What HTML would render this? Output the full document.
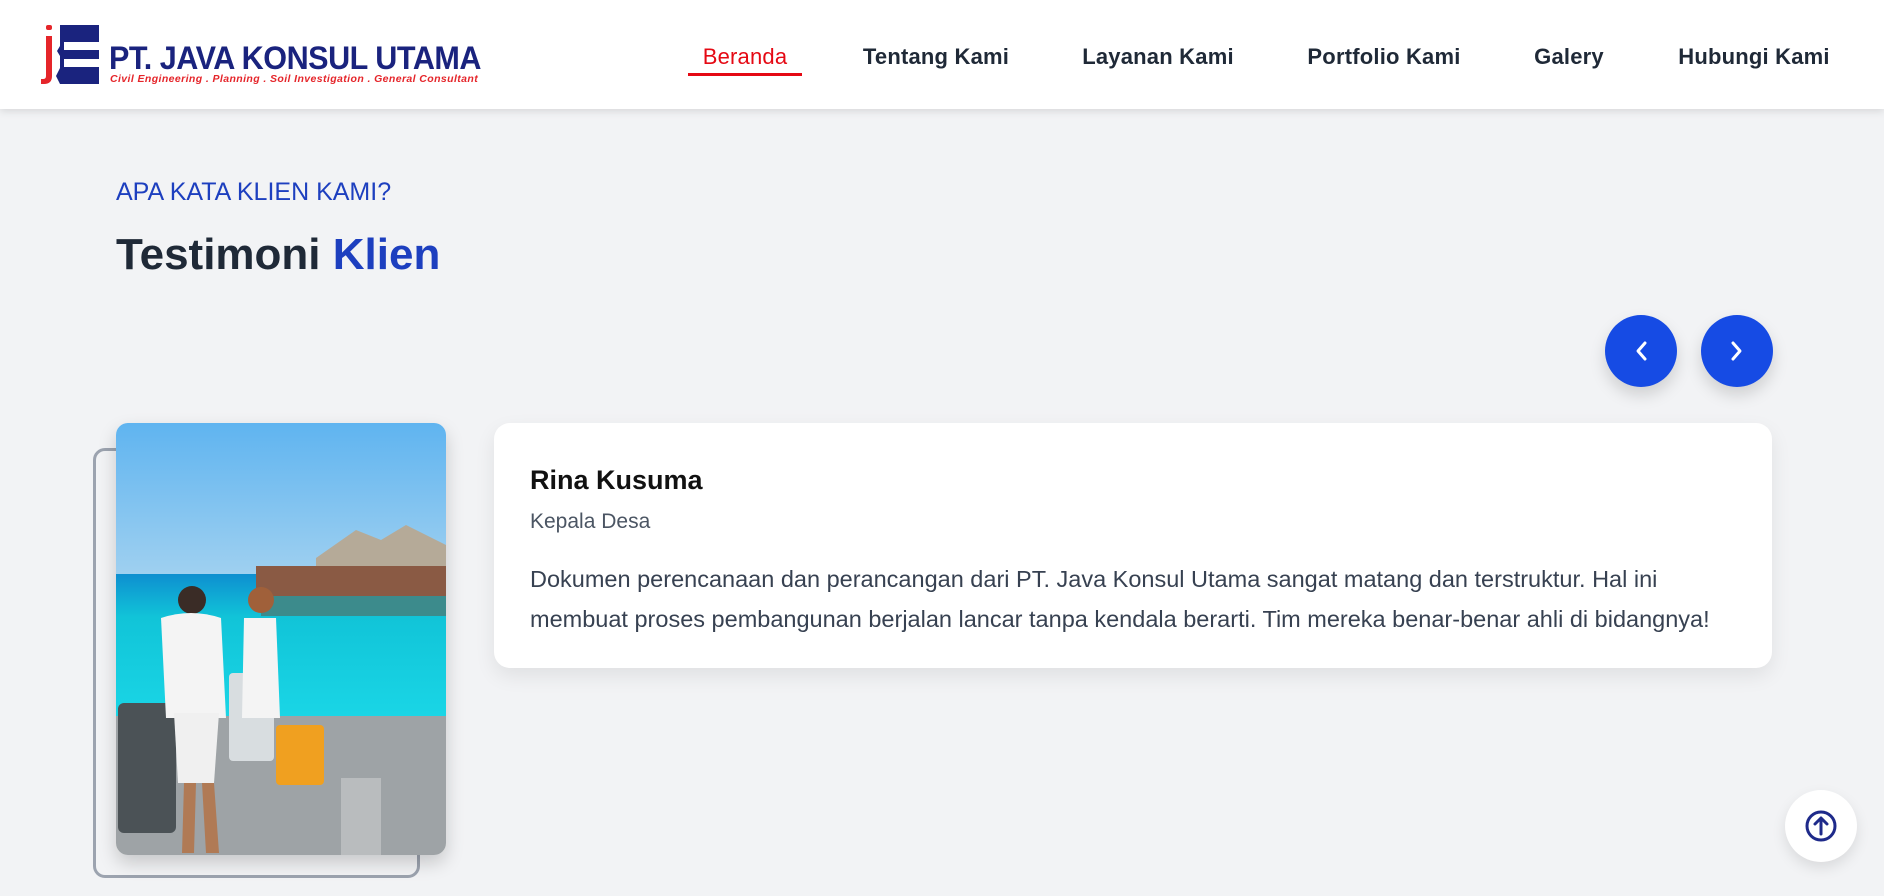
<!DOCTYPE html>
<html><head><meta charset="utf-8"><style>
*{margin:0;padding:0;box-sizing:border-box}
body{width:1884px;height:896px;background:#f2f3f5;font-family:"Liberation Sans",sans-serif;position:relative;overflow:hidden}
.hdr{position:absolute;left:0;top:0;width:1884px;height:109px;background:#fff;box-shadow:0 2px 8px rgba(0,0,0,.12)}
.nav a{position:absolute;top:44px;font-size:22px;color:#1f2937;text-decoration:none;transform:translateX(-50%);white-space:nowrap;font-weight:bold;letter-spacing:0.2px}
.abs{position:absolute}
</style></head><body>
<div class="hdr">
  <svg class="abs" style="left:40px;top:22px" width="62" height="66" viewBox="40 22 62 66">
    <rect x="46" y="25" width="6" height="5" rx="2" fill="#e5252a"/>
    <path d="M46 36h6v40q0 8-8 8h-3v-5h2q3 0 3-3z" fill="#e5252a"/>
    <path d="M60 25h39v17H64v8h35v17H64v0l0 0H64v0h35v17H60l-4-8 4-8v-12l-3-5 3-5z" fill="#1a237e"/>
    <path d="M64 42h35v8H64zM64 59h35v8H64z" fill="#fff"/>
  </svg>
  <div class="abs" style="left:109px;top:40px;font-size:32px;font-weight:bold;color:#1a237e;letter-spacing:-0.5px;transform:scaleX(0.955);transform-origin:left">PT. JAVA KONSUL UTAMA</div>
  <div class="abs" style="left:110px;top:73px;font-size:10.5px;font-weight:bold;font-style:italic;color:#e5252a;letter-spacing:0.4px">Civil Engineering . Planning . Soil Investigation . General Consultant</div>
  <div class="nav">
    <a style="left:745px;color:#e50914;font-weight:normal">Beranda</a>
    <a style="left:936px">Tentang Kami</a>
    <a style="left:1158px">Layanan Kami</a>
    <a style="left:1384px">Portfolio Kami</a>
    <a style="left:1569px">Galery</a>
    <a style="left:1754px">Hubungi Kami</a>
  </div>
  <div class="abs" style="left:688px;top:73px;width:114px;height:3px;background:#e50914"></div>
</div>
<div class="abs" style="left:116px;top:178px;font-size:25px;color:#1d3fbf">APA KATA KLIEN KAMI?</div>
<div class="abs" style="left:116px;top:230px;font-size:44px;font-weight:bold;color:#1f2937">Testimoni <span style="color:#1d3fbf">Klien</span></div>

<div class="abs" style="left:1605px;top:315px;width:72px;height:72px;border-radius:50%;background:#164be4;box-shadow:0 8px 16px rgba(0,0,0,.15)">
<svg width="72" height="72"><path d="M40 28l-7 8 7 8" stroke="#fff" stroke-width="3" fill="none" stroke-linecap="round" stroke-linejoin="round"/></svg></div>
<div class="abs" style="left:1701px;top:315px;width:72px;height:72px;border-radius:50%;background:#164be4;box-shadow:0 8px 16px rgba(0,0,0,.15)">
<svg width="72" height="72"><path d="M32 28l7 8-7 8" stroke="#fff" stroke-width="3" fill="none" stroke-linecap="round" stroke-linejoin="round"/></svg></div>

<div class="abs" style="left:93px;top:448px;width:327px;height:430px;border:3px solid #9ca3af;border-radius:12px"></div>
<div class="abs" style="left:116px;top:423px;width:330px;height:432px;border-radius:12px;overflow:hidden;box-shadow:0 8px 18px rgba(0,0,0,.18)">
<svg width="330" height="432" viewBox="0 0 330 432">
<defs><linearGradient id="sky" x1="0" y1="0" x2="0" y2="1"><stop offset="0" stop-color="#5fb4f0"/><stop offset="1" stop-color="#9fd0f0"/></linearGradient>
<linearGradient id="sea" x1="0" y1="0" x2="0" y2="1"><stop offset="0" stop-color="#0e8fd0"/><stop offset=".3" stop-color="#11c4d8"/><stop offset="1" stop-color="#1ad6e6"/></linearGradient></defs>
<rect width="330" height="152" fill="url(#sky)"/>
<rect y="151" width="330" height="145" fill="url(#sea)"/>
<path d="M200 135l40-28 25 10 25-15 40 20v30H200z" fill="#b5aa98"/>
<rect x="140" y="143" width="190" height="30" fill="#8a5a44"/>
<rect x="145" y="173" width="185" height="20" fill="#3c8b8c"/>
<rect y="293" width="330" height="139" fill="#9ea3a6"/>
<rect x="225" y="355" width="40" height="77" fill="#b9bcbe"/>
<rect x="2" y="280" width="58" height="130" rx="6" fill="#4b5256"/>
<rect x="113" y="250" width="45" height="88" rx="4" fill="#d8dde0"/>
<rect x="160" y="302" width="48" height="60" rx="4" fill="#f0a020"/>
<circle cx="76" cy="177" r="14" fill="#3a2c26"/>
<path d="M45 195q30-10 60 0l5 100H50z" fill="#f4f4f4"/>
<path d="M58 290h45l-5 70H62z" fill="#f0f0f0"/>
<path d="M68 360h12l-2 70H66zM86 360h12l5 70H90z" fill="#b07a55"/>
<circle cx="145" cy="177" r="13" fill="#a0603a"/>
<path d="M128 195h32l4 100h-38z" fill="#f4f4f4"/>
</svg></div>

<div class="abs" style="left:494px;top:423px;width:1278px;height:245px;background:#fff;border-radius:16px;box-shadow:0 8px 20px rgba(0,0,0,.08)">
  <div class="abs" style="left:36px;top:42px;font-size:27px;font-weight:bold;color:#111">Rina Kusuma</div>
  <div class="abs" style="left:36px;top:87px;font-size:21px;color:#4b5563">Kepala Desa</div>
  <div class="abs" style="left:36px;top:136px;width:1230px;font-size:23.5px;line-height:40px;color:#374151;white-space:nowrap">Dokumen perencanaan dan perancangan dari PT. Java Konsul Utama sangat matang dan terstruktur. Hal ini<br>membuat proses pembangunan berjalan lancar tanpa kendala berarti. Tim mereka benar-benar ahli di bidangnya!</div>
</div>

<div class="abs" style="left:1785px;top:790px;width:72px;height:72px;border-radius:50%;background:#fff;box-shadow:0 6px 14px rgba(0,0,0,.1)">
<svg width="72" height="72"><circle cx="36" cy="36" r="14" stroke="#1e2a8a" stroke-width="3" fill="none"/><path d="M36 44V29M30 34l6-6 6 6" stroke="#1e2a8a" stroke-width="3" fill="none" stroke-linecap="round" stroke-linejoin="round"/></svg></div>
</body></html>
